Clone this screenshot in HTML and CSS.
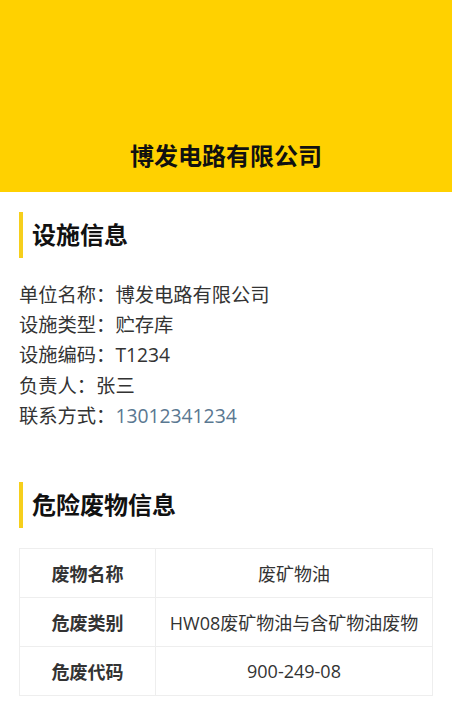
FILE: index.html
```html
<!DOCTYPE html>
<html lang="zh-CN">
<head>
    <meta charset="UTF-8">
    <meta name="viewport" content="width=device-width, initial-scale=1.0">
    <title>设施信息</title>
    <link rel="stylesheet" href="styles.css">
</head>
<body>
    <div class="header">
        <h1 class="company">博发电路有限公司</h1>
    </div>

    <div class="section">
        <h2 class="section-title">设施信息</h2>
        <div class="info-list">
            <div class="info-item">单位名称：博发电路有限公司</div>
            <div class="info-item">设施类型：贮存库</div>
            <div class="info-item">设施编码：T1234</div>
            <div class="info-item">负责人：张三</div>
            <div class="info-item">联系方式：<span class="phone">13012341234</span></div>
        </div>
    </div>

    <div class="section waste">
        <h2 class="section-title">危险废物信息</h2>
        <table class="waste-table">
            <tr>
                <th>废物名称</th>
                <td>废矿物油</td>
            </tr>
            <tr>
                <th>危废类别</th>
                <td>HW08废矿物油与含矿物油废物</td>
            </tr>
            <tr>
                <th>危废代码</th>
                <td>900-249-08</td>
            </tr>
        </table>
    </div>
</body>
</html>
```

FILE: styles.css
```css
body {
    font-family: "Open Sans", "Noto Sans CJK SC", sans-serif;
    margin: 0;
    padding: 0;
    background-color: #fff;
    color: #333;
}
.header {
    height: 192px;
    background-color: #ffd100;
    display: flex;
    align-items: flex-end;
    justify-content: center;
    padding-bottom: 19px;
    box-sizing: border-box;
}
.company {
    margin: 0;
    font-size: 24px;
    line-height: 34px;
    font-weight: bold;
    color: #111;
}
.section {
    padding: 0 19px;
}
.section-title {
    margin: 20px 0 0;
    height: 46px;
    line-height: 46px;
    border-left: 4px solid #f6cf1c;
    padding-left: 9px;
    font-size: 24px;
    font-weight: bold;
    color: #111;
}
.info-list {
    margin-top: 22px;
}
.info-item {
    font-size: 19.3px;
    line-height: 30.2px;
}
.phone {
    color: #5a7891;
}
.waste {
    margin-top: 51px;
}
.waste-table {
    width: 100%;
    margin-top: 20px;
    border-collapse: collapse;
    font-size: 18px;
}
.waste-table th, .waste-table td {
    border: 1px solid #eee;
    height: 48px;
    padding: 0;
    text-align: center;
}
.waste-table th {
    width: 135px;
    font-weight: bold;
}
```
